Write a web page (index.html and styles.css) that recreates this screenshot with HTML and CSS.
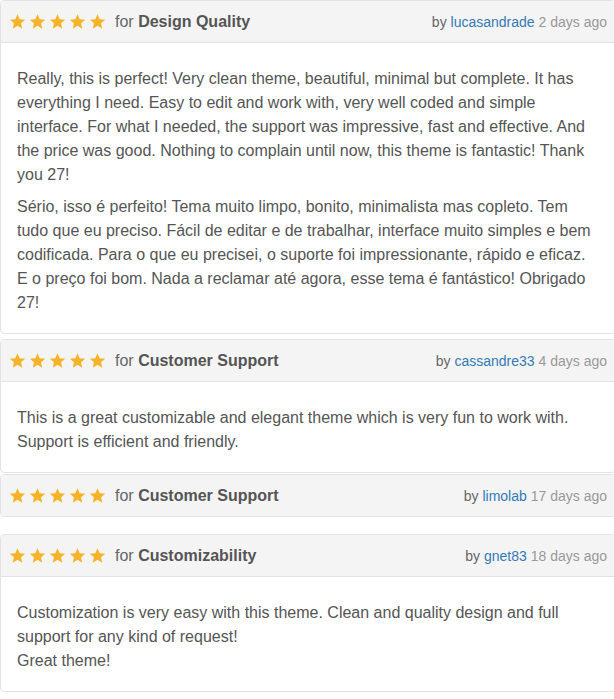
FILE: index.html
```html
<!DOCTYPE html>
<html>

<head>
	<meta charset='utf-8'>
	<title>Reviews</title>
	<meta name='viewport' content='width=device-width, initial-scale=1'>
	<link rel="stylesheet" href="styles.css">
</head>

<body>
	<svg width="0" height="0" class="defs">
		<symbol id="star" viewBox="0 0 24 24">
			<path d="M12 1.6l3.1 7.1 7.7.7-5.8 5.1 1.7 7.6L12 18.1l-6.7 4 1.7-7.6-5.8-5.1 7.7-.7z" />
		</symbol>
	</svg>

	<div class="review review-first">
		<div class="review-head">
			<div class="rating">
				<span class="stars">
					<svg><use href="#star" /></svg><svg><use href="#star" /></svg><svg><use href="#star" /></svg><svg><use href="#star" /></svg><svg><use href="#star" /></svg>
				</span>
				<span class="for">for <b>Design Quality</b></span>
			</div>
			<div class="meta">by <a href="#">lucasandrade</a> <span class="date">2 days ago</span></div>
		</div>
		<div class="review-body">
			<p>Really, this is perfect! Very clean theme, beautiful, minimal but complete. It has everything I need. Easy to edit and work with, very well coded and simple interface. For what I needed, the support was impressive, fast and effective. And the price was good. Nothing to complain until now, this theme is fantastic! Thank you 27!</p>
			<p>Sério, isso é perfeito! Tema muito limpo, bonito, minimalista mas copleto. Tem tudo que eu preciso. Fácil de editar e de trabalhar, interface muito simples e bem codificada. Para o que eu precisei, o suporte foi impressionante, rápido e eficaz. E o preço foi bom. Nada a reclamar até agora, esse tema é fantástico! Obrigado 27!</p>
		</div>
	</div>

	<div class="review review-tight">
		<div class="review-head">
			<div class="rating">
				<span class="stars">
					<svg><use href="#star" /></svg><svg><use href="#star" /></svg><svg><use href="#star" /></svg><svg><use href="#star" /></svg><svg><use href="#star" /></svg>
				</span>
				<span class="for">for <b>Customer Support</b></span>
			</div>
			<div class="meta">by <a href="#">cassandre33</a> <span class="date">4 days ago</span></div>
		</div>
		<div class="review-body">
			<p>This is a great customizable and elegant theme which is very fun to work with. Support is efficient and friendly.</p>
		</div>
	</div>

	<div class="review">
		<div class="review-head">
			<div class="rating">
				<span class="stars">
					<svg><use href="#star" /></svg><svg><use href="#star" /></svg><svg><use href="#star" /></svg><svg><use href="#star" /></svg><svg><use href="#star" /></svg>
				</span>
				<span class="for">for <b>Customer Support</b></span>
			</div>
			<div class="meta">by <a href="#">limolab</a> <span class="date">17 days ago</span></div>
		</div>
	</div>

	<div class="review">
		<div class="review-head">
			<div class="rating">
				<span class="stars">
					<svg><use href="#star" /></svg><svg><use href="#star" /></svg><svg><use href="#star" /></svg><svg><use href="#star" /></svg><svg><use href="#star" /></svg>
				</span>
				<span class="for">for <b>Customizability</b></span>
			</div>
			<div class="meta">by <a href="#">gnet83</a> <span class="date">18 days ago</span></div>
		</div>
		<div class="review-body">
			<p>Customization is very easy with this theme. Clean and quality design and full support for any kind of request!<br>Great theme!</p>
		</div>
	</div>
</body>

</html>
```

FILE: styles.css
```css
* {
	box-sizing: border-box;
}

body {
	margin: 0;
	background: white;
	color: #555;
	font-family: "Liberation Sans", Arial, Helvetica, sans-serif;
	overflow: hidden;
}

.defs {
	position: absolute;
}

.review {
	margin-right: -2px;
	margin-bottom: 17px;
	border: 1px solid #e3e3e3;
	border-radius: 4px;
	overflow: hidden;
}

.review-first {
	margin-bottom: 5px;
}

.review-tight {
	margin-bottom: 1px;
}

.review-head {
	display: flex;
	justify-content: space-between;
	align-items: center;
	height: 41px;
	padding: 0 8px 0 8px;
	background: #f4f4f4;
}

.review-body {
	padding: 24px 16px 10px;
	border-top: 1px solid #e3e3e3;
	font-size: 16px;
	line-height: 24px;
}

.review-body p {
	margin: 0 0 8px;
}

.rating {
	display: flex;
	align-items: center;
}

.stars {
	display: flex;
	gap: 3px;
	margin-right: 9px;
}

.stars svg {
	width: 17px;
	height: 17px;
	fill: #f5b32a;
}

.for {
	font-size: 16px;
	color: #666;
}

.for b {
	color: #555;
}

.meta {
	font-size: 14px;
	color: #666;
}

.meta a {
	color: #337ab7;
	text-decoration: none;
}

.date {
	color: #999;
}
```
